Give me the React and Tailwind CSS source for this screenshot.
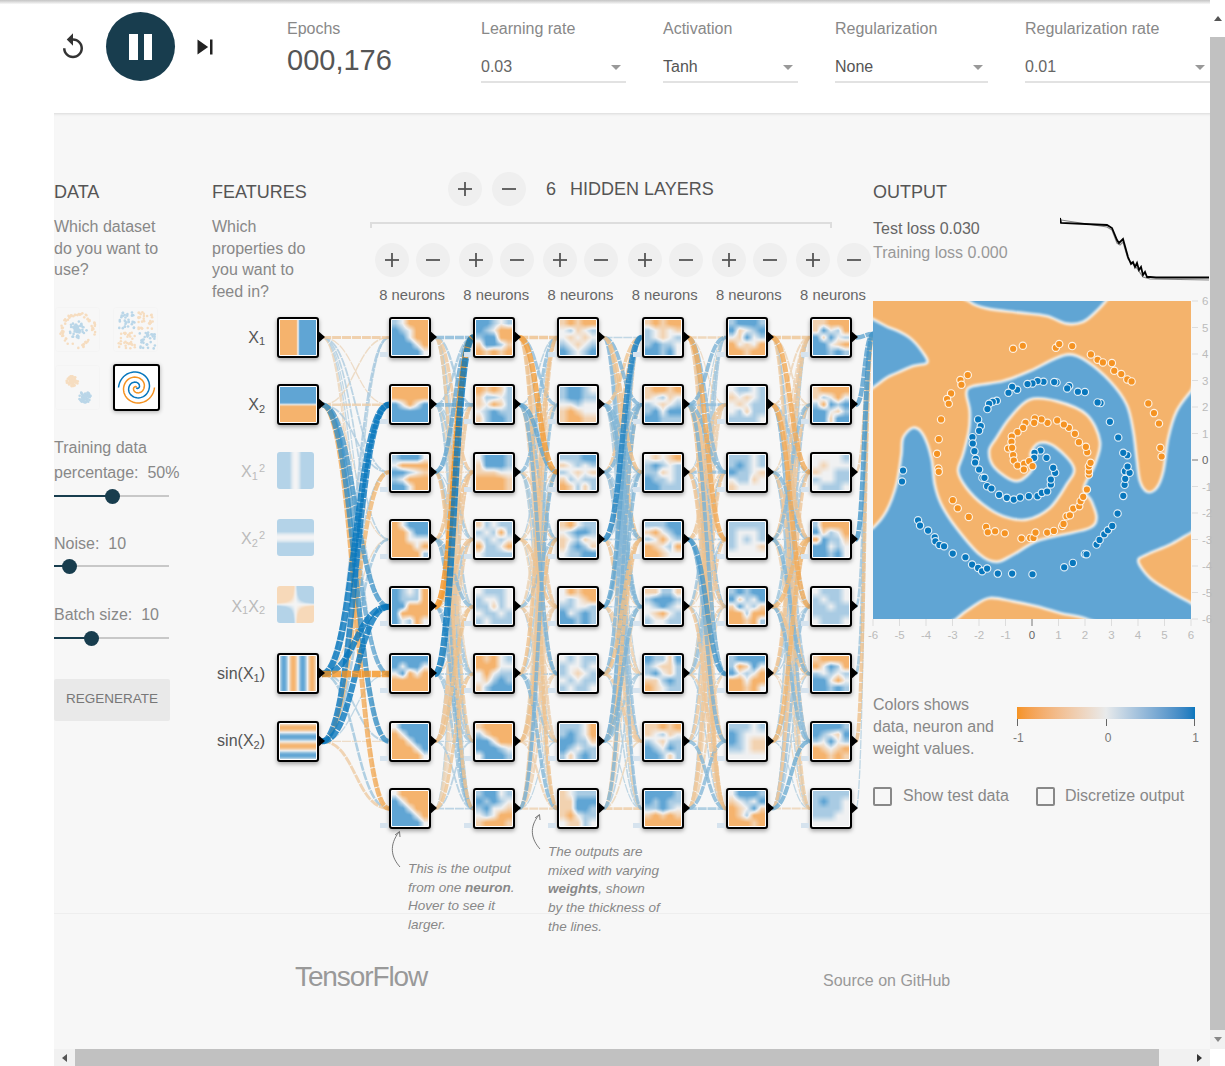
import { useEffect, useRef } from 'react';

const SANS = "[font-family:'Liberation_Sans',Arial,sans-serif]";

// node pictures, O/o = orange, w = blank, b/B = blue, rows split by /
const HIDDEN = [
  ['bwOOO/BbwOO/BBwOO/BBBwO/BBBBw', 'OOOOO/OOOOO/BwOwB/BBBBB/BBBBB', 'bBBBw/wOOOO/BBbwo/bwOOO/BBwOO', 'OwBBB/OOwBB/OOwww/OOOwO/OOOOb', 'BbwbO/BbbbO/BBOOO/BOOOO/BwbOw', 'BBBBB/BwBBw/wBOwO/OOOOO/OOOOO', 'wBBBB/OwBBB/OOwBB/OOOwB/OOOOw', 'wOOOO/BwOOO/BBwOO/BBBwO/BBBBw'],
  ['BBbwb/BbwOO/bBBOO/oBBbo/OoOoO', 'OoOob/obbwb/owOob/wbBbb/obBBb', 'wBBBb/oBBBb/oooww/OOOOo/OOOOo', 'obwbb/bwbOb/wbwbw/ObbwO/wbbbb', 'wbbbw/bwwbw/bbobw/wbbwb/bwbbb', 'OoOwb/OOOww/wOwbb/wobBb/obBBB', 'oOOOO/boOOO/BBwOO/BBBbw/wBBBb', 'bBBwb/BbBbw/bBwwo/wbwOO/oOOOo'],
  ['oOoOO/wbowb/wowow/bwowb/BbwbB', 'bBBbw/bBBbb/wwbww/oOoww/oOOoo', 'bbbBB/owbwb/bwowo/obwbb/Oobob', 'oOwbb/wbBBb/owbow/obBbo/wbbBB', 'wOoOO/wbwoO/bbwwb/BwbBb/BBbBb', 'wbwbb/bwwbw/bwowb/wbwbb/bwbbw', 'bbbwO/bBbwO/BBbbo/Bbwbb/bobBb', 'owbbb/ooBBB/ooBBb/oOwbb/woobw'],
  ['oOoOO/bwowo/bwowb/bBbbw/BBbBw', 'oOOoO/owbow/bwowb/bBwBB/BBbbb', 'wowoO/bBbwb/bbowb/Bbbwb/BBbbb', 'bbbBB/oOwbB/bwOwb/OowbO/OOoww', 'oobbo/bBBBb/wbBbw/woOwb/bwwbb', 'BbboB/bwoob/bBwob/oobBb/Oowbb', 'ooOoO/owbow/bwobb/BbwBb/BBbob', 'BBBBb/BbBbb/bbBbw/oOoOo/OOOOO'],
  ['bBBBb/BowbB/woBwb/OwowO/OOoOO', 'wbbwb/owowb/wowbb/wbobb/bbbbw', 'bbbwb/bBbwb/Bbbwo/wbbow/owwww', 'bbbbb/bwwwb/bwbwb/bwwwo/wwwww', 'bBbBB/BobwB/oBwbo/OObOO/OOoOb', 'bBBBB/bOoBw/BwbwO/OOwOO/OOoOw', 'bbbwb/Bbwww/Bbwoo/bbwoo/wwwww', 'wBBBb/owbwB/OowBo/OobOO/OOOoO'],
  ['ooOOO/oBwbO/BoBwb/BBwoO/BBbBb', 'oOOOO/obwOw/bOBbB/BBwob/BBoBB', 'wwwwb/wowww/owwbb/bwwbb/wbbbw', 'bOOOO/BobwO/OBbbo/BBwbw/BBbBw', 'wbbbw/bwbbw/bbwbb/bbbbb/wbbbw', 'oOOOO/OwBbO/bwbwb/BBwOw/BBbBb', 'BBBBb/BbwoB/bwBwb/OowoO/OOoOo', 'bbbbb/bBbbw/bbbbw/bbbww/wwwww'],
];

const clamp = (v) => Math.max(-1, Math.min(1, v));
const FEATURES = [
  { label: 'X', sub: '1', on: true, fn: (x) => clamp(x * 1.6) },
  { label: 'X', sub: '2', on: true, fn: (x, y) => clamp(y * 1.6) },
  { label: 'X', sub: '1', sup: '2', on: false, fn: (x) => clamp((x * x) / 4) },
  { label: 'X', sub: '2', sup: '2', on: false, fn: (x, y) => clamp((y * y) / 4) },
  { label: 'X', sub: '1', label2: 'X', sub2: '2', on: false, fn: (x, y) => clamp((x * y) / 3) },
  { label: 'sin(X', sub: '1', tail: ')', on: true, fn: (x) => Math.sin(x) * 0.9 },
  { label: 'sin(X', sub: '2', tail: ')', on: true, fn: (x, y) => Math.sin(y) * 0.9 },
];

const CHAR = { O: -1, o: -0.45, w: 0, b: 0.45, B: 1 };
const toRgb = (v) => {
  const to = v < 0 ? [245, 179, 109] : [96, 165, 212];
  const t = Math.abs(v);
  return [240, 241, 242].map((c, i) => Math.round(c + (to[i] - c) * t));
};

function sampleGrid(rows, u, v) {
  const h = rows.length;
  const w = rows[0].length;
  const fx = Math.max(0, Math.min(w - 1, u * w - 0.5));
  const fy = Math.max(0, Math.min(h - 1, v * h - 0.5));
  const x0 = Math.floor(fx);
  const y0 = Math.floor(fy);
  const x1 = Math.min(w - 1, x0 + 1);
  const y1 = Math.min(h - 1, y0 + 1);
  const tx = fx - x0;
  const ty = fy - y0;
  const top = CHAR[rows[y0][x0]] * (1 - tx) + CHAR[rows[y0][x1]] * tx;
  const bottom = CHAR[rows[y1][x0]] * (1 - tx) + CHAR[rows[y1][x1]] * tx;
  return top * (1 - ty) + bottom * ty;
}

function Heat({ grid, fn }) {
  const ref = useRef(null);
  useEffect(() => {
    const canvas = ref.current;
    const rows = grid ? grid.split('/') : null;
    const w = 36;
    const h = 36;
    canvas.width = w;
    canvas.height = h;
    const ctx = canvas.getContext('2d');
    const img = ctx.createImageData(w, h);
    for (let r = 0; r < h; r++) {
      for (let c = 0; c < w; c++) {
        const u = (c + 0.5) / w;
        const t = (r + 0.5) / h;
        const v = rows ? sampleGrid(rows, u, t) : fn(u * 12 - 6, 6 - t * 12);
        const rgb = toRgb(clamp(v * 1.1));
        const i = (r * w + c) * 4;
        img.data[i] = rgb[0];
        img.data[i + 1] = rgb[1];
        img.data[i + 2] = rgb[2];
        img.data[i + 3] = 255;
      }
    }
    ctx.putImageData(img, 0, 0);
  }, [grid, fn]);
  return <canvas ref={ref} className="block w-full h-full" />;
}

function Neuron({ grid, fn, hidden }) {
  return (
    <div className="relative z-10 w-[42px] h-[41px] shrink-0 bg-white border-2 border-black rounded-[3px] p-px shadow-[0_2px_4px_rgba(0,0,0,0.35)]">
      <Heat grid={grid} fn={fn} />
      <span className="absolute left-[38px] top-[11px] w-0 h-0 border-y-[7px] border-y-transparent border-l-[8px] border-l-black" />
      {hidden && <span className="absolute left-[-11px] top-[33px] w-[8px] h-[5px] bg-[#d6e3ee]" />}
    </div>
  );
}

function makeRand(seed) {
  let s = seed;
  return () => {
    s = (s + 0x6d2b79f5) | 0;
    let t = Math.imul(s ^ (s >>> 15), 1 | s);
    t = (t + Math.imul(t ^ (t >>> 7), 61 | t)) ^ t;
    return ((t ^ (t >>> 14)) >>> 0) / 4294967296;
  };
}

const ROW_Y = (r) => 317 + r * 67.3 + 20.5;
const COL_X = (c) => 389 + c * 84.2;

// the links that stand out in the picture, [from col, from row, to row, weight]; col -1 = features
const STRONG = [
  [-1, 0, 0, -0.4], [-1, 1, 1, -0.3], [-1, 1, 4, 0.7], [-1, 1, 6, 0.75], [-1, 1, 5, 0.6], [-1, 1, 7, -0.7], [-1, 5, 1, 1], [-1, 5, 4, 0.9],
  [-1, 6, 4, 0.9], [-1, 6, 1, 0.85], [-1, 5, 5, -1], [-1, 6, 7, -0.35], [-1, 5, 7, 0.3], [-1, 6, 2, -0.6], [-1, 6, 3, 0.3],
  [0, 0, 0, 0.45], [0, 1, 1, 0.5], [0, 5, 0, 1], [0, 4, 0, -0.9], [0, 2, 0, 0.6], [0, 7, 5, -0.45], [0, 5, 7, 0.3],
  [1, 0, 0, -0.5], [1, 0, 2, -0.8], [1, 1, 2, 0.6], [1, 0, 1, 0.4], [1, 7, 7, -0.25], [1, 5, 6, 0.3],
  [2, 0, 1, 0.5], [2, 0, 2, -0.5], [2, 3, 0, 0.8], [2, 4, 0, 0.6], [2, 1, 0, -0.45], [2, 7, 7, -0.35], [2, 2, 0, -0.4],
  [3, 0, 3, -0.7], [3, 0, 0, -0.25], [3, 1, 1, 0.4], [3, 2, 2, 0.4], [3, 3, 5, 0.7], [3, 3, 6, 0.5], [3, 7, 7, 0.3], [3, 7, 6, 0.45],
  [4, 0, 0, -0.45], [4, 0, 2, -0.7], [4, 1, 4, -0.7], [4, 4, 3, -0.6], [4, 7, 6, 0.55], [4, 5, 1, -0.4], [4, 7, 7, -0.2], [4, 6, 3, -0.6],
];
const TO_OUTPUT = [0.6, 0.65, -0.3, 0.7, 0.3, 0.35, -0.5, 0.08];

function linkColor(w) {
  const to = w < 0 ? [245, 147, 34] : [8, 119, 189];
  const t = Math.min(1, w * w + 0.24);
  const rgb = [232, 234, 235].map((c, i) => Math.round(c + (to[i] - c) * t));
  return `rgb(${rgb.join(',')})`;
}

function buildLinks() {
  const rand = makeRand(176);
  const strong = new Map(STRONG.map(([c, a, b, w]) => [`${c}:${a}:${b}`, w]));
  const links = [];
  const add = (x1, y1, x2, y2, w) => {
    const mx = (x1 + x2) / 2;
    links.push({ d: `M${x1} ${y1}C${mx} ${y1} ${mx} ${y2} ${x2} ${y2}`, w });
  };
  for (let c = -1; c < 5; c++) {
    const sources = c === -1 ? [0, 1, 5, 6] : [0, 1, 2, 3, 4, 5, 6, 7];
    sources.forEach((a) => {
      for (let b = 0; b < 8; b++) {
        const size = rand();
        const sign = rand() < 0.5 ? -1 : 1;
        // a row straight across stays faint, the bundles in the gaps carry the colour
        const scale = a === b ? 0.12 : c === -1 ? 0.24 : 0.46;
        const base = sign * (0.05 + Math.pow(size, 1.6) * scale);
        const w = strong.get(`${c}:${a}:${b}`) ?? base;
        add(c === -1 ? 322 : COL_X(c) + 46, ROW_Y(a), COL_X(c + 1), ROW_Y(b), w);
      }
    });
  }
  TO_OUTPUT.forEach((w, a) => add(COL_X(5) + 46, ROW_Y(a), 873, 334, w));
  return links.sort((p, q) => Math.abs(p.w) - Math.abs(q.w));
}

const LINKS = buildLinks();

function NetworkLinks() {
  return (
    <svg className="absolute left-0 top-0 overflow-visible pointer-events-none" width="661" height="700" viewBox="212 179 661 700">
      {LINKS.map((l, i) => (
        <path key={i} d={l.d} fill="none" stroke={linkColor(l.w)} strokeWidth={0.9 + Math.abs(l.w) * 5.6} strokeDasharray="9 1" strokeOpacity="0.8" />
      ))}
      <path d="M400 867C391 857 389 845 399 832M395 835L399.500 831.500L400 837" fill="none" stroke="#777" />
      <path d="M540 849C531 839 529 827 539 815M535 818L539.500 814.500L540 820" fill="none" stroke="#777" />
    </svg>
  );
}

// ---- output map, traced in the 953 unit box of the crop
function smooth(pts) {
  const n = pts.length;
  let d = `M${pts[0][0]} ${pts[0][1]}`;
  for (let i = 0; i < n; i++) {
    const p0 = pts[(i - 1 + n) % n];
    const p1 = pts[i];
    const p2 = pts[(i + 1) % n];
    const p3 = pts[(i + 2) % n];
    const c1 = [p1[0] + (p2[0] - p0[0]) / 6, p1[1] + (p2[1] - p0[1]) / 6];
    const c2 = [p2[0] - (p3[0] - p1[0]) / 6, p2[1] - (p3[1] - p1[1]) / 6];
    d += `C${c1[0]} ${c1[1]} ${c2[0]} ${c2[1]} ${p2[0]} ${p2[1]}`;
  }
  return d + 'Z';
}

const BLUE_AREAS = [
  [[290, -20], [300, 12], [350, 32], [450, 45], [530, 55], [590, 78], [640, 72], [680, 40], [712, 5], [730, -20]],
  [[-30, 70], [60, 90], [120, 120], [160, 165], [172, 195], [130, 205], [60, 235], [-30, 275]],
  [[-30, 710], [10, 690], [50, 640], [80, 560], [95, 470], [100, 420], [130, 390], [160, 410], [185, 480], [195, 560], [215, 620], [260, 690], [330, 770], [380, 792], [430, 770], [500, 730], [580, 710], [660, 690], [680, 660], [665, 610], [642, 570],
    [675, 500], [690, 430], [650, 350], [560, 310], [480, 305], [420, 360], [380, 420], [358, 460], [375, 510], [440, 550], [490, 510], [482, 468], [510, 435], [560, 450], [612, 510], [590, 560], [540, 630], [470, 665], [400, 655], [340, 620], [290, 570], [265, 520], [280, 470], [297, 400], [300, 340], [290, 285], [310, 265], [400, 250], [480, 220], [550, 185], [600, 170], [650, 190], [720, 250], [770, 320], [790, 400], [800, 480], [810, 550], [832, 582], [860, 570], [880, 520], [895, 420], [920, 340], [963, 280], [1000, 240], [1010, 1000], [-30, 1000]],
];
const ORANGE_AREAS = [
  [[1010, 690], [963, 705], [900, 740], [830, 770], [805, 790], [840, 840], [900, 880], [963, 915], [1010, 940]],
  [[230, 1000], [260, 963], [310, 925], [360, 900], [430, 910], [500, 925], [570, 945], [650, 963], [700, 1000]],
];

const BLUE_DOTS = [[100,518],[97,551],[145,667],[151,683],[175,698],[195,718],[197,730],[209,741],[223,745],[249,767],[287,778],[307,800],[325,810],[337,820],[352,812],[384,827],[427,827],[488,829],[583,808],[609,795],[645,768],[650,769],[680,740],[689,726],[703,709],[714,697],[727,684],[743,647],[760,594],[764,561],[766,543],[765,520],[779,525],[773,506],[772,472],[760,465],[745,419],[720,372],[692,316],[683,314],[645,283],[624,282],[598,265],[592,272],[560,254],[553,253],[521,252],[503,250],[488,257],[473,259],[442,276],[427,267],[416,285],[381,309],[369,312],[358,318],[353,334],[325,365],[333,385],[328,399],[308,418],[309,437],[314,460],[318,483],[316,494],[328,515],[338,540],[344,540],[352,565],[365,572],[388,591],[411,600],[432,605],[451,599],[477,595],[503,595],[516,585],[532,581],[543,560],[543,545],[556,525],[550,510],[530,480],[512,458],[494,465],[493,480]];
const ORANGE_DOTS = [[430,153],[459,144],[558,150],[568,139],[607,145],[663,170],[683,186],[699,194],[726,196],[733,219],[754,229],[772,245],[785,251],[835,317],[852,346],[867,377],[871,450],[875,476],[294,232],[272,247],[275,261],[244,287],[232,304],[237,318],[214,365],[207,424],[202,468],[206,512],[207,522],[249,607],[264,631],[297,657],[349,687],[354,703],[376,700],[405,706],[455,722],[481,720],[491,720],[497,704],[532,704],[552,699],[577,684],[581,678],[590,655],[600,652],[610,632],[628,625],[632,610],[640,597],[651,575],[657,530],[657,520],[657,505],[662,495],[652,463],[648,447],[627,433],[615,408],[597,390],[582,380],[562,368],[533,375],[515,365],[495,362],[493,375],[467,375],[460,390],[443,403],[426,416],[425,432],[415,452],[427,450],[430,472],[432,488],[443,503],[463,498],[462,515],[478,490],[488,505]];

const TICKS = [-6, -5, -4, -3, -2, -1, 0, 1, 2, 3, 4, 5, 6];

function OutputPlot() {
  return (
    <svg className="block overflow-visible" width="337" height="340" viewBox="0 0 337 340">
      <defs>
        <filter id="edge" x="-5%" y="-5%" width="110%" height="110%">
          <feGaussianBlur stdDeviation="2.6" />
        </filter>
      </defs>
      <svg x="0" y="0" width="318" height="318" viewBox="10 10 953 953">
        <rect x="0" y="0" width="1000" height="1000" fill="#f4b36c" />
        {BLUE_AREAS.map((a, i) => <path key={i} d={smooth(a)} fill="#60a5d4" />)}
        {ORANGE_AREAS.map((a, i) => <path key={i} d={smooth(a)} fill="#f4b36c" />)}
        <g filter="url(#edge)" fill="none" stroke="#f3f3f0" strokeWidth="8">
          {BLUE_AREAS.map((a, i) => <path key={i} d={smooth(a)} />)}
          {ORANGE_AREAS.map((a, i) => <path key={i} d={smooth(a)} />)}
        </g>
        {BLUE_DOTS.map((p, i) => <circle key={i} cx={p[0]} cy={p[1]} r="11" fill="#0877bd" stroke="#fff" strokeOpacity="0.85" strokeWidth="3.500" />)}
        {ORANGE_DOTS.map((p, i) => <circle key={i} cx={p[0]} cy={p[1]} r="11" fill="#f59322" stroke="#fff" strokeOpacity="0.85" strokeWidth="3.500" />)}
      </svg>
      {TICKS.map((k) => {
        const p = (k + 6) * 26.5;
        const q = (6 - k) * 26.5;
        const tone = k === 0 ? '#666' : '#bbb';
        return (
          <g key={k} fontFamily="Liberation Sans, Arial, sans-serif" fontSize="11.500" fill={tone}>
            <line x1={p} x2={p} y1="318" y2="325" stroke={k === 0 ? '#777' : '#ddd'} />
            <text x={p} y="338" textAnchor="middle">{k}</text>
            <line x1="319" x2="325" y1={q} y2={q} stroke={k === 0 ? '#777' : '#ddd'} />
            <text x="329" y={q + 4}>{k}</text>
          </g>
        );
      })}
    </svg>
  );
}

const LOSS = '0,1 1,6 47,8 52,11 57,23 59,26 63,22 68,40 71,47 73,45 75,50 77,46 79,53 81,50 83,58 85,55 87,60 90,60 96,60.500 100,60.500 149,60.500';
function LossChart() {
  return (
    <svg className="block" width="150" height="72" viewBox="0 0 150 72">
      <polyline points="1,3 47,10 52,13 57,26 60,28 63,25 68,42 76,50 83,60 90,62 149,63" fill="none" stroke="#888" strokeWidth="1.200" />
      <polyline points={LOSS} fill="none" stroke="#000" strokeWidth="1.800" />
    </svg>
  );
}

// ---- dataset pictures
function DatasetDots({ kind }) {
  const rand = makeRand(kind.length * 31);
  const dots = [];
  for (let i = 0; i < 130; i++) {
    const a = rand() * Math.PI * 2;
    let x;
    let y;
    let blue;
    if (kind === 'circle') {
      blue = i % 2 === 0;
      const r = blue ? rand() * 9 : 14 + rand() * 4;
      x = 22 + r * Math.cos(a);
      y = 22 + r * Math.sin(a);
    } else if (kind === 'xor') {
      const qx = i % 2;
      const qy = (i >> 1) % 2;
      x = (qx ? 24 : 4) + rand() * 17;
      y = (qy ? 24 : 4) + rand() * 17;
      blue = (qx === 1) === (qy === 1);
    } else {
      blue = i % 2 === 0;
      const r = rand() * 6;
      x = (blue ? 29 : 16) + r * Math.cos(a);
      y = (blue ? 31 : 15) + r * Math.sin(a);
    }
    dots.push(<circle key={i} cx={x} cy={y} r="1.300" fill={blue ? '#0877bd' : '#f59322'} />);
  }
  return <svg className="block" width="45" height="45" viewBox="0 0 45 45">{dots}</svg>;
}

function spiralPath(delta) {
  const pts = [];
  for (let i = 0; i <= 80; i++) {
    const r = (i / 80) * 18;
    const t = 1.75 * (i / 80) * 2 * Math.PI + delta;
    pts.push(`${(21.500 + r * Math.sin(t)).toFixed(1)},${(21.500 + r * Math.cos(t)).toFixed(1)}`);
  }
  return pts.join(' ');
}

function DatasetThumb({ kind }) {
  return (
    <div className="w-[45px] h-[45px] rounded-[3px] border border-[#eee] opacity-25">
      <DatasetDots kind={kind} />
    </div>
  );
}

function Slider({ fill }) {
  return (
    <div className="relative w-[115px] h-[14px]">
      <div className="absolute left-0 right-0 top-[6px] h-[2px] bg-[#c8c8c8]" />
      <div className="absolute left-0 top-[6px] h-[2px] bg-[#183d4e]" style={{ width: fill }} />
      <div className="absolute top-0 w-[15px] h-[15px] rounded-full bg-[#183d4e] -ml-[7px]" style={{ left: fill }} />
    </div>
  );
}

function Dropdown({ label, value, width, dark }) {
  return (
    <div className={`${width} shrink-0`}>
      <div className="text-[16px] leading-[20px] text-[#888]">{label}</div>
      <div className="mt-[16px] pb-[2px] pr-[5px] border-b-2 border-[#e2e2e2] flex items-center justify-between">
        <span className={`text-[16px] leading-[24px] ${dark ? 'text-[#555]' : 'text-[#666]'}`}>{value}</span>
        <span className="w-0 h-0 border-x-[5px] border-x-transparent border-t-[5px] border-t-[#999]" />
      </div>
    </div>
  );
}

function RoundButton({ kind }) {
  return (
    <button type="button" className="w-[34px] h-[34px] shrink-0 rounded-full bg-[#efefef] flex items-center justify-center">
      <svg width="16" height="16" viewBox="0 0 16 16" stroke="#555" strokeWidth="1.800">
        <line x1="1" x2="15" y1="8" y2="8" />
        {kind === 'add' && <line x1="8" x2="8" y1="1" y2="15" />}
      </svg>
    </button>
  );
}

function FeatureLabel({ f }) {
  return (
    <div className={`w-[53px] h-[41px] flex items-center justify-end text-[16px] leading-none ${f.on ? 'text-[#555]' : 'text-[#bbb]'}`}>
      <span className="whitespace-nowrap">
        {f.label}<sub className="text-[11px]">{f.sub}</sub>
        {f.sup && <sup className="text-[11px] ml-[1px]">{f.sup}</sup>}
        {f.label2}{f.sub2 && <sub className="text-[11px]">{f.sub2}</sub>}
        {f.tail}
      </span>
    </div>
  );
}

function Title({ children }) {
  return <h4 className="h-[24px] text-[18px] leading-[26px] text-[#555] whitespace-pre">{children}</h4>;
}

export default function App() {
  return (
    <div className={`flex w-[1225px] h-[1066px] overflow-hidden bg-white ${SANS}`}>
      <div className="w-[1210px] shrink-0 flex flex-col">
        {/* Top controls */}
        <header className="relative h-[113px] shrink-0 flex items-start bg-white bg-gradient-to-b from-[#c4c4c4] from-0% to-white to-[4%]">
          <div className="ml-[58px] mt-[12px] flex items-center h-[69px]">
            <svg width="30" height="30" viewBox="0 0 24 24" fill="#333">
              <path d="M12 5V1L7 6l5 5V7c3.310 0 6 2.690 6 6s-2.690 6-6 6-6-2.690-6-6H4c0 4.420 3.580 8 8 8s8-3.580 8-8-3.580-8-8-8z" />
            </svg>
            <button type="button" className="ml-[18px] w-[69px] h-[69px] rounded-full bg-[#183d4e] flex items-center justify-center gap-[6px]">
              <span className="w-[8.500px] h-[26px] bg-white" />
              <span className="w-[8.500px] h-[26px] bg-white" />
            </button>
            <svg className="ml-[15px]" width="30" height="30" viewBox="0 0 24 24" fill="#222">
              <path d="M6 18l8.500-6L6 6v12zM16 6v12h2V6h-2z" />
            </svg>
          </div>
          <div className="ml-[67px] mt-[19px] w-[194px] shrink-0">
            <div className="text-[16px] leading-[20px] text-[#888]">Epochs</div>
            <div className="mt-[4px] text-[29px] leading-[34px] text-[#555]">000,176</div>
          </div>
          <div className="mt-[19px] flex gap-[37px]">
            <Dropdown label="Learning rate" value="0.03" width="w-[145px]" />
            <Dropdown label="Activation" value="Tanh" width="w-[135px]" dark />
            <Dropdown label="Regularization" value="None" width="w-[153px]" dark />
            <Dropdown label="Regularization rate" value="0.01" width="w-[185px]" />
          </div>
        </header>

        <main className="relative z-10 ml-[54px] h-[800px] shrink-0 flex pt-[66px] bg-[#f7f7f7] shadow-[inset_0_3px_3px_-2px_rgba(0,0,0,0.12)]">
          {/* Data column */}
          <section className="w-[158px] shrink-0">
            <Title>DATA</Title>
            <p className="mt-[13px] text-[16px] leading-[21.500px] text-[#888]">Which dataset<br />do you want to<br />use?</p>
            <div className="mt-[26px] ml-px grid grid-cols-[45px_45px] gap-x-[13px] gap-y-[13px]">
              <DatasetThumb kind="circle" />
              <DatasetThumb kind="xor" />
              <DatasetThumb kind="gauss" />
              <div className="w-[47px] h-[47px] -mt-[1px] rounded-[3px] border-2 border-black bg-white shadow-[0_1px_4px_rgba(0,0,0,0.3)]">
                <svg className="block" width="43" height="43" viewBox="0 0 43 43" fill="none" strokeWidth="1.500">
                  <polyline points={spiralPath(0)} stroke="#0877bd" />
                  <polyline points={spiralPath(Math.PI)} stroke="#f59322" />
                </svg>
              </div>
            </div>
            <p className="mt-[24px] text-[16px] leading-[25px] text-[#888] whitespace-pre">Training data{'\n'}percentage:  50%</p>
            <div className="mt-[4px]"><Slider fill="58px" /></div>
            <p className="mt-[29px] text-[16px] leading-[24px] text-[#888] whitespace-pre">Noise:  10</p>
            <div className="mt-[3px]"><Slider fill="15px" /></div>
            <p className="mt-[30px] text-[16px] leading-[24px] text-[#888] whitespace-pre">Batch size:  10</p>
            <div className="mt-[4px]"><Slider fill="37px" /></div>
            <button type="button" className="mt-[34px] w-[116px] h-[42px] bg-[#e9e9e9] text-[13.500px] text-[#777] rounded-[2px]">REGENERATE</button>
          </section>

          {/* Network column */}
          <section className="relative w-[661px] shrink-0 flex">
            <NetworkLinks />
            <div className="relative w-[158px] shrink-0">
              <div className="h-[138px]">
                <Title>FEATURES</Title>
                <p className="mt-[13px] text-[16px] leading-[21.500px] text-[#888]">Which<br />properties do<br />you want to<br />feed in?</p>
              </div>
              <div className="flex flex-col gap-[26.300px]">
                {FEATURES.map((f, i) => (
                  <div key={i} className="flex items-center gap-[12px]">
                    <FeatureLabel f={f} />
                    {f.on ? (
                      <Neuron fn={f.fn} />
                    ) : (
                      <div className="relative z-10 self-start w-[37px] h-[37px] rounded-[3px] overflow-hidden opacity-45">
                        <Heat fn={f.fn} />
                      </div>
                    )}
                  </div>
                ))}
              </div>
            </div>

            <div className="relative w-[503px] shrink-0">
              <div className="h-[138px]">
                <div className="flex items-center pl-[78px] h-[20px]">
                  <div className="flex gap-[10px] items-center">
                    <RoundButton kind="add" />
                    <RoundButton kind="remove" />
                  </div>
                  <span className="ml-[20px] text-[18px] leading-[24px] text-[#555]">6</span>
                  <span className="ml-[14px] text-[18px] leading-[24px] text-[#555]">HIDDEN LAYERS</span>
                </div>
                <div className="mt-[23px] w-[462px] h-[6px] border-2 border-b-0 border-[#ddd]" />
                <div className="mt-[15px] flex">
                  {HIDDEN.map((_, c) => (
                    <div key={c} className="w-[84.200px] shrink-0">
                      <div className="ml-[5px] flex gap-[7px]">
                        <RoundButton kind="add" />
                        <RoundButton kind="remove" />
                      </div>
                      <div className="mt-[8px] text-center text-[14.800px] leading-[20px] text-[#666] whitespace-nowrap">8 neurons</div>
                    </div>
                  ))}
                </div>
              </div>
              <div className="flex pl-[19px] w-[520px]">
                {HIDDEN.map((col, c) => (
                  <div key={c} className="w-[84.200px] shrink-0 flex flex-col gap-[26.300px]">
                    {col.map((grid, r) => <Neuron key={r} grid={grid} hidden />)}
                  </div>
                ))}
              </div>
              <div className="flex items-start pl-[38px] text-[13.500px] leading-[18.700px] italic text-[#888]">
                <p className="mt-[31px] w-[140px]">This is the output<br />from one <b>neuron</b>.<br />Hover to see it<br />larger.</p>
                <p className="mt-[14px] w-[125px]">The outputs are<br />mixed with varying<br /><b>weights</b>, shown<br />by the thickness of<br />the lines.</p>
              </div>
            </div>
          </section>

          {/* Output column */}
          <section className="relative z-20 w-[337px] shrink-0">
            <div className="h-[122px]">
              <Title>OUTPUT</Title>
              <div className="mt-[14px] flex items-start">
                <div className="w-[187px] text-[16px] leading-[24px]">
                  <div className="text-[#666]">Test loss 0.030</div>
                  <div className="text-[#999]">Training loss 0.000</div>
                </div>
                <LossChart />
              </div>
            </div>
            <OutputPlot />
            <div className="mt-[53px] flex items-start">
              <p className="w-[144px] shrink-0 text-[16px] leading-[22px] text-[#888]">Colors shows<br />data, neuron and<br />weight values.</p>
              <div className="mt-[13px] w-[178px] shrink-0">
                <div className="h-[12px] bg-gradient-to-r from-[#f59322] via-[#e8eaeb] to-[#0877bd]" />
                <div className="flex justify-between">
                  <span className="w-px h-[7px] bg-[#666]" />
                  <span className="w-px h-[7px] bg-[#666]" />
                  <span className="w-px h-[7px] bg-[#666]" />
                </div>
                <div className="mt-[5px] flex justify-between text-[12px] leading-[14px] text-[#777] -mx-[4px]">
                  <span>-1</span><span>0</span><span>1</span>
                </div>
              </div>
            </div>
            <div className="mt-[26px] flex items-center text-[16px] leading-[20px] text-[#888]">
              <span className="w-[19px] h-[19px] rounded-[2px] border-2 border-[#888]" />
              <span className="ml-[11px] w-[133px]">Show test data</span>
              <span className="w-[19px] h-[19px] rounded-[2px] border-2 border-[#888]" />
              <span className="ml-[10px]">Discretize output</span>
            </div>
          </section>
        </main>

        <footer className="ml-[54px] h-[136px] shrink-0 bg-[#f7f7f7] border-t border-[#eee] flex items-start pl-[241px]">
          <span className="mt-[46px] w-[528px] shrink-0 text-[28px] leading-[34px] tracking-[-1.100px] text-[#999]">TensorFlow</span>
          <span className="mt-[57px] text-[16px] leading-[20px] text-[#999]">Source on GitHub</span>
        </footer>

        {/* Horizontal scrollbar */}
        <div className="ml-[54px] h-[17px] shrink-0 flex items-stretch bg-[#f1f1f1]">
          <div className="w-[21px] flex items-center justify-center">
            <span className="w-0 h-0 border-y-[4px] border-y-transparent border-r-[5px] border-r-[#555]" />
          </div>
          <div className="w-[1084px] bg-[#c1c1c1]" />
          <div className="flex-1 flex items-center justify-end pr-[8px]">
            <span className="w-0 h-0 border-y-[4px] border-y-transparent border-l-[5px] border-l-[#333]" />
          </div>
        </div>
      </div>

      {/* Vertical scrollbar */}
      <div className="w-[15px] shrink-0 flex flex-col">
        <div className="h-[37px] bg-white flex items-center justify-center">
          <span className="w-0 h-0 border-x-[4px] border-x-transparent border-b-[5px] border-b-[#555]" />
        </div>
        <div className="h-[993px] bg-[#c1c1c1]" />
        <div className="h-[19px] bg-[#f1f1f1] flex items-center justify-center">
          <span className="w-0 h-0 border-x-[4px] border-x-transparent border-t-[5px] border-t-[#888]" />
        </div>
      </div>
    </div>
  );
}
